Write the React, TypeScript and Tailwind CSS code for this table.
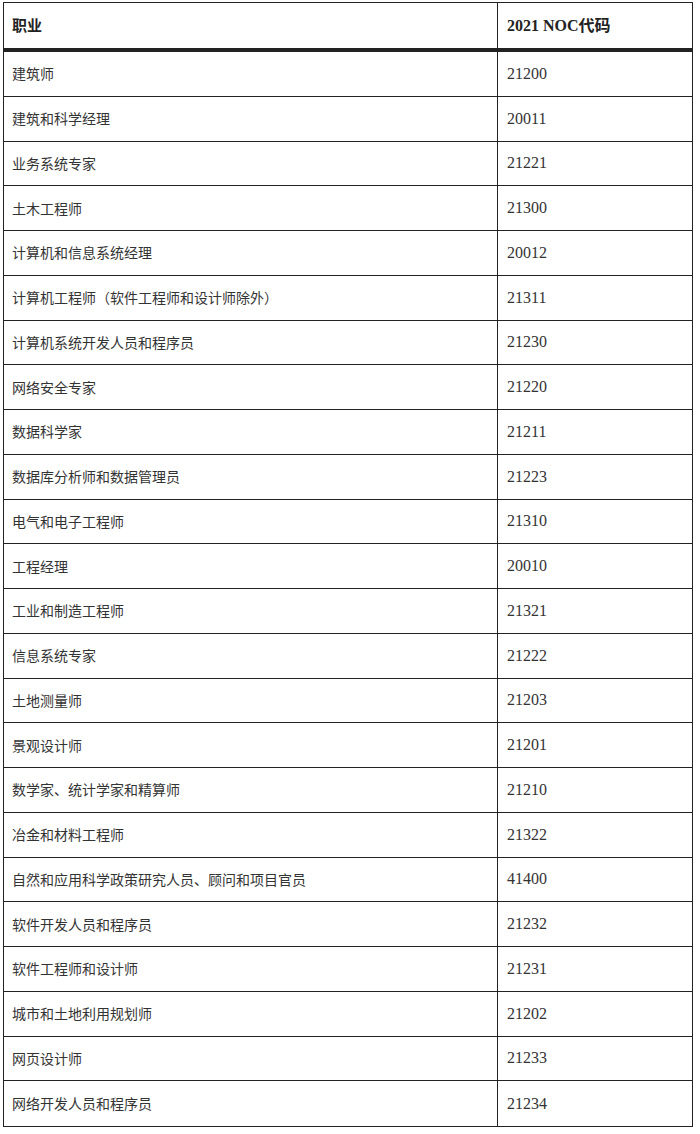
const rows: [string, string][] = [
  ['建筑师', '21200'],
  ['建筑和科学经理', '20011'],
  ['业务系统专家', '21221'],
  ['土木工程师', '21300'],
  ['计算机和信息系统经理', '20012'],
  ['计算机工程师（软件工程师和设计师除外）', '21311'],
  ['计算机系统开发人员和程序员', '21230'],
  ['网络安全专家', '21220'],
  ['数据科学家', '21211'],
  ['数据库分析师和数据管理员', '21223'],
  ['电气和电子工程师', '21310'],
  ['工程经理', '20010'],
  ['工业和制造工程师', '21321'],
  ['信息系统专家', '21222'],
  ['土地测量师', '21203'],
  ['景观设计师', '21201'],
  ['数学家、统计学家和精算师', '21210'],
  ['冶金和材料工程师', '21322'],
  ['自然和应用科学政策研究人员、顾问和项目官员', '41400'],
  ['软件开发人员和程序员', '21232'],
  ['软件工程师和设计师', '21231'],
  ['城市和土地利用规划师', '21202'],
  ['网页设计师', '21233'],
  ['网络开发人员和程序员', '21234'],
];

const cjk = "font-['Noto_Sans_CJK_SC',sans-serif]";
const serif = "font-['Liberation_Serif','Noto_Sans_CJK_SC',serif]";

export default function App() {
  return (
    <div className="w-[700px] h-[1134px] bg-white pt-[2px] pl-[3px]">
      <div className="w-[690px] border-[1.5px] border-[#222] text-[#333]">
        <div className="flex h-[49px] border-b-[4px] border-[#222]">
          <div className={`w-[494px] border-r-[1.5px] border-[#222] flex items-center pl-[8px] text-[15px] font-bold text-[#222] ${cjk}`}>
            职业
          </div>
          <div className={`flex-1 flex items-center pl-[9px] text-[16px] font-bold text-[#222] ${serif}`}>
            2021 NOC代码
          </div>
        </div>
        {rows.map(([job, code], i) => (
          <div
            key={code}
            className={`flex h-[44.75px] ${i < rows.length - 1 ? 'border-b-[1.5px] border-[#222]' : ''}`}
          >
            <div className={`w-[494px] border-r-[1.5px] border-[#222] flex items-center pl-[8px] text-[14px] ${cjk}`}>
              {job}
            </div>
            <div className={`flex-1 flex items-center pl-[9px] text-[16px] ${serif}`}>
              {code}
            </div>
          </div>
        ))}
      </div>
    </div>
  );
}
